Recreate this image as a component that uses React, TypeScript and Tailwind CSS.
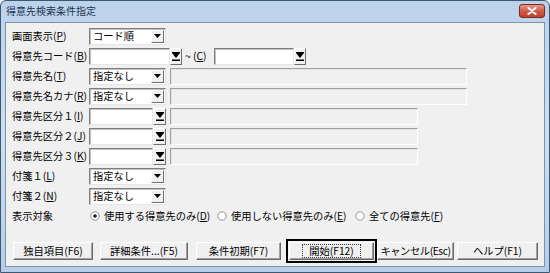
import React from "react"

const font = "font-['Noto_Sans_CJK_JP','Noto_Sans_CJK_SC',sans-serif]"

function Arrow() {
  return (
    <svg width="7" height="4" viewBox="0 0 7 4">
      <path d="M0 0H7L3.5 4Z" fill="#000" />
    </svg>
  )
}

function Select({ value, w }: { value: string; w: string }) {
  return (
    <div className={`${w} h-[17px] flex items-center bg-white border border-t-[#7f7f7f] border-l-[#7f7f7f] border-r-[#e6e6e6] border-b-[#e6e6e6] shadow-[inset_1px_1px_0_#c0c0c0]`}>
      <div className="flex-1 pl-[3px] text-[10.25px] leading-none whitespace-nowrap">{value}</div>
      <div className="w-[13px] h-[13px] mr-[1px] flex items-center justify-center bg-[#f0f0f0] border border-t-white border-l-white border-r-[#6f6f6f] border-b-[#6f6f6f]">
        <Arrow />
      </div>
    </div>
  )
}

function Field({ w }: { w: string }) {
  return (
    <div className={`${w} h-[17px] bg-white border border-t-[#7f7f7f] border-l-[#7f7f7f] border-r-[#e6e6e6] border-b-[#e6e6e6] shadow-[inset_1px_1px_0_#c0c0c0]`} />
  )
}

function PickButton({ w }: { w: string }) {
  return (
    <div className={`${w} h-[17px] flex items-center justify-center bg-[#f0f0f0] border border-t-white border-l-white border-r-[#6f6f6f] border-b-[#6f6f6f]`}>
      <svg width="8" height="9" viewBox="0 0 8 9">
        <rect x="0" y="0" width="8" height="1" fill="#000" />
        <path d="M0 1H8L4 6Z" fill="#000" />
        <rect x="0" y="7.5" width="8" height="1.5" fill="#000" />
      </svg>
    </div>
  )
}

function Disabled({ w }: { w: string }) {
  return (
    <div className={`${w} h-[17px] ml-[4px] bg-[#f0f0f0] border border-t-[#a0a0a0] border-l-[#a0a0a0] border-r-white border-b-white shadow-[inset_1px_1px_0_#e3e3e3]`} />
  )
}

function Label({ text, k }: { text: string; k: string }) {
  return (
    <div className="w-[77px] text-[10.25px] leading-none whitespace-nowrap">
      {text}(<u>{k}</u>)
    </div>
  )
}

function Radio({ on, text, k, w }: { on?: boolean; text: string; k: string; w: string }) {
  return (
    <div className={`${w} flex items-center gap-[2px] text-[10.25px] leading-none whitespace-nowrap`}>
      <svg width="10" height="10" viewBox="0 0 10 10">
        <circle cx="5" cy="5" r="4.2" fill="#fff" stroke="#8a8a8a" strokeWidth="0.9" />
        {on && <circle cx="5" cy="5" r="1.8" fill="#1a1a1a" />}
      </svg>
      <span className="ml-[2px]">
        {text}(<u>{k}</u>)
      </span>
    </div>
  )
}

function Btn({ w, children }: { w: string; children: React.ReactNode }) {
  return (
    <div className={`${w} h-[18px] flex items-center justify-center bg-[#f0f0f0] border border-t-white border-l-white border-r-[#696969] border-b-[#696969] shadow-[inset_-1px_-1px_0_#a0a0a0] text-[10.25px] leading-none whitespace-nowrap`}>
      {children}
    </div>
  )
}

export default function App() {
  return (
    <div className={`w-[550px] h-[273px] bg-white text-black ${font}`}>
      <div className="w-full h-full flex flex-col border border-[#3d5873] rounded-t-[6px] bg-gradient-to-b from-[#bcd2eb] via-[#cfdff1] to-[#b7cde6]">
        {/* title bar */}
        <div className="h-[21px] flex items-start justify-between pl-[5px] pr-[4px]">
          <div className="pt-[5px] text-[10px] leading-none text-[#1b3350]">得意先検索条件指定</div>
          <div className="mt-[3px] w-[26px] h-[14px] rounded-[3px] border border-[#7a2a22] bg-gradient-to-b from-[#e59a8c] via-[#cf5a48] to-[#c0432f] flex items-center justify-center">
            <svg width="10" height="8" viewBox="0 0 10 8">
              <path d="M1.5 1L8.5 7M8.5 1L1.5 7" stroke="#fff" strokeWidth="2" strokeLinecap="round" />
            </svg>
          </div>
        </div>

        {/* client */}
        <div className="flex-1 mx-[4px] mb-[5px] bg-[#f0f0f0] border border-[#7d93ab] flex flex-col">
          <div className="pt-[3px] pl-[6px] flex flex-col">
            <div className="h-[20px] flex items-center">
              <Label text="画面表示" k="P" />
              <Select value="コード順" w="w-[77px]" />
            </div>
            <div className="h-[20px] flex items-center">
              <Label text="得意先コード" k="B" />
              <Field w="w-[81px]" />
              <PickButton w="w-[12px]" />
              <div className="w-[32px] pl-[3px] text-[10.25px] leading-none whitespace-nowrap">
                ~ (<u>C</u>)
              </div>
              <Field w="w-[80px]" />
              <PickButton w="w-[12px]" />
            </div>
            <div className="h-[20px] flex items-center">
              <Label text="得意先名" k="T" />
              <Select value="指定なし" w="w-[77px]" />
              <Disabled w="w-[297px]" />
            </div>
            <div className="h-[20px] flex items-center">
              <Label text="得意先名カナ" k="R" />
              <Select value="指定なし" w="w-[77px]" />
              <Disabled w="w-[297px]" />
            </div>
            <div className="h-[20px] flex items-center">
              <Label text="得意先区分１" k="I" />
              <Field w="w-[64px]" />
              <PickButton w="w-[13px]" />
              <Disabled w="w-[248px]" />
            </div>
            <div className="h-[20px] flex items-center">
              <Label text="得意先区分２" k="J" />
              <Field w="w-[64px]" />
              <PickButton w="w-[13px]" />
              <Disabled w="w-[248px]" />
            </div>
            <div className="h-[20px] flex items-center">
              <Label text="得意先区分３" k="K" />
              <Field w="w-[64px]" />
              <PickButton w="w-[13px]" />
              <Disabled w="w-[248px]" />
            </div>
            <div className="h-[20px] flex items-center">
              <Label text="付箋１" k="L" />
              <Select value="指定なし" w="w-[77px]" />
            </div>
            <div className="h-[20px] flex items-center">
              <Label text="付箋２" k="N" />
              <Select value="指定なし" w="w-[77px]" />
            </div>
            <div className="h-[20px] flex items-center">
              <div className="w-[78px] text-[10.25px] leading-none">表示対象</div>
              <Radio on text="使用する得意先のみ" k="D" w="w-[127px]" />
              <Radio text="使用しない得意先のみ" k="E" w="w-[138px]" />
              <Radio text="全ての得意先" k="F" w="w-[100px]" />
            </div>
          </div>

          {/* buttons */}
          <div className="mt-[13px] h-[24px] pl-[7px] flex items-center">
            <Btn w="w-[80px]">独自項目(F6)</Btn>
            <div className="w-[7px]" />
            <Btn w="w-[88px]">詳細条件...(F5)</Btn>
            <div className="w-[8px]" />
            <Btn w="w-[85px]">条件初期(F7)</Btn>
            <div className="w-[5px]" />
            <div className="w-[91px] h-[24px] border-2 border-black p-[1px] flex items-center">
              <Btn w="w-full">
                <span className="px-[6px] py-[1px] border border-dotted border-[#333]">開始(F12)</span>
              </Btn>
            </div>
            <Btn w="w-[77px]">
              <span className="tracking-[-0.4px]">キャンセル(Esc)</span>
            </Btn>
            <div className="w-[3px]" />
            <Btn w="w-[81px]">ヘルプ(F1)</Btn>
          </div>
        </div>
      </div>
    </div>
  )
}
